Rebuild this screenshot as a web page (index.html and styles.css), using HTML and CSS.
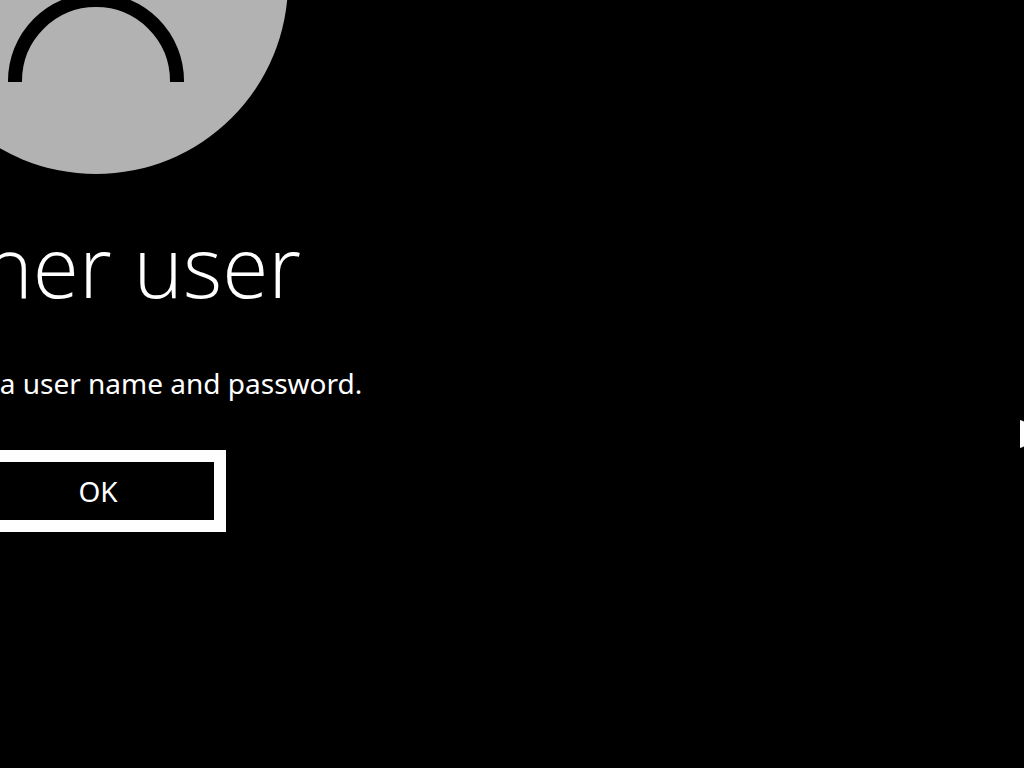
FILE: index.html
```
<!DOCTYPE html>
<html lang="en">
<head>
  <meta charset="UTF-8">
  <title>Other user</title>
  <link rel="stylesheet" href="styles.css">
</head>
<body>
  <main class="login">
    <svg class="avatar" viewBox="0 0 384 384" aria-hidden="true">
      <circle cx="192" cy="192" r="192" fill="#b2b2b2"/>
      <circle cx="192" cy="146" r="60" fill="none" stroke="#000" stroke-width="14"/>
      <path d="M111 292V291A81 81 0 0 1 273 291V292" fill="none" stroke="#000" stroke-width="14"/>
    </svg>
    <h1 class="user-name">Other user</h1>
    <p class="message">Please enter a user name and password.</p>
    <button class="ok-button" type="button">OK</button>
  </main>

  <svg class="pointer" viewBox="0 0 18 28" aria-hidden="true">
    <path d="M0 0L3 1L18 14L3 27L0 28Z" fill="#fff"/>
  </svg>
</body>
</html>
```
FILE: styles.css
```
body {
  margin: 0;
  min-height: 100vh;
  position: relative;
  overflow: hidden;
  background-color: #000;
  color: #fff;
  font-family: "Noto Sans", "Open Sans", sans-serif;
}

.login {
  width: 192px;
  margin-top: -210px;
  display: flex;
  flex-direction: column;
  align-items: center;
  white-space: nowrap;
}

.avatar {
  width: 384px;
  height: 384px;
  flex-shrink: 0;
}

.user-name {
  margin: 32px 0 0;
  font-family: "Open Sans", sans-serif;
  font-size: 84px;
  font-weight: 340;
  line-height: 120px;
}

.message {
  margin: 37px 0 0;
  font-size: 28px;
  line-height: 40px;
}

.ok-button {
  width: 260px;
  height: 82px;
  margin-top: 47px;
  padding: 0 0 0 4px;
  flex-shrink: 0;
  border: 12px solid #fff;
  background-color: #000;
  color: #fff;
  font-family: inherit;
  font-size: 28px;
}

/* mouse pointer resting at the screen edge */
.pointer {
  position: absolute;
  top: 420px;
  right: -14px;
  width: 18px;
  height: 28px;
}
```
